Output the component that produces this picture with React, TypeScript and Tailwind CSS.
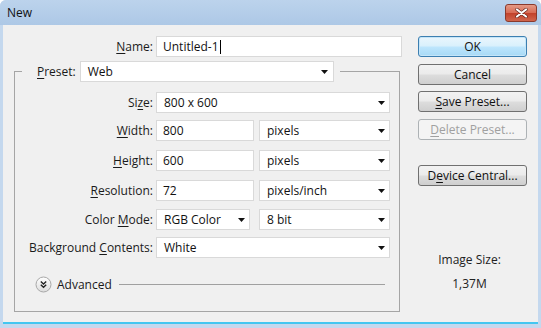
import React from "react";

const font = { fontFamily: '"Open Sans", "Liberation Sans", sans-serif' };

function Arrow() {
  return (
    <svg width="7" height="4" viewBox="0 0 7 4" className="shrink-0">
      <path d="M0 0h7L3.5 4z" fill="#111" />
    </svg>
  );
}

function Select({ value, className }: { value: string; className: string }) {
  return (
    <div
      className={`flex h-[21px] items-center justify-between border border-[#d9d9d9] bg-white pl-[7px] pr-[4px] text-[#111] ${className}`}
    >
      <span>{value}</span>
      <Arrow />
    </div>
  );
}

function Field({ value, className }: { value: string; className: string }) {
  return (
    <div
      className={`flex h-[21px] items-center border border-[#d9d9d9] bg-white pl-[6px] text-[#111] ${className}`}
    >
      {value}
    </div>
  );
}

function Label({ children }: { children: React.ReactNode }) {
  return <div className="w-[141px] shrink-0 pr-[3px] text-right text-[#1a1a1a]">{children}</div>;
}

function Btn({
  children,
  primary,
  disabled,
  className = "",
}: {
  children: React.ReactNode;
  primary?: boolean;
  disabled?: boolean;
  className?: string;
}) {
  let look =
    "border-[#707070] bg-[linear-gradient(#f2f2f2_0%,#ebebeb_48%,#dddddd_52%,#cfcfcf_100%)] text-[#111]";
  if (primary)
    look =
      "border-[#3c7fb1] bg-[linear-gradient(#eaf6fd_0%,#d9f0fc_48%,#bee6fd_52%,#a7d9f5_100%)] text-[#111] shadow-[inset_0_0_0_1px_#c5e5f8]";
  if (disabled) look = "border-[#adb2b5] bg-[#f4f4f4] text-[#a0a0a0]";
  return (
    <div
      className={`flex h-[21px] w-[109px] items-center justify-center rounded-[3px] border ${look} ${className}`}
    >
      {children}
    </div>
  );
}

const u = "underline underline-offset-[2px] decoration-1";

export default function App() {
  return (
    <div
      className="flex h-[328px] w-[541px] flex-col overflow-hidden rounded-t-[6px] bg-[#c4d8ee] text-[12px] leading-[15px]"
      style={font}
    >
      {/* title bar */}
      <div className="flex h-[25px] shrink-0 items-center justify-between bg-[linear-gradient(#bcd3ec,#adc8e6)] pl-[7px] pr-[4px]">
        <span className="text-[12px] text-[#111]">New</span>
        <div className="flex h-[18px] w-[32px] items-center justify-center rounded-[3px] border border-[#8a3a2c] bg-[linear-gradient(#e49a86_0%,#d86a53_50%,#c2422b_52%,#d0654c_100%)]">
          <svg width="13" height="10" viewBox="0 0 13 10">
            <path d="M2 1.5 11 8.5M11 1.5 2 8.5" stroke="#5a2018" strokeWidth="3.4" strokeLinecap="round" />
            <path d="M2 1.5 11 8.5M11 1.5 2 8.5" stroke="#fff" strokeWidth="2.2" strokeLinecap="round" />
          </svg>
        </div>
      </div>

      {/* body */}
      <div className="mx-[3px] mb-[4px] flex flex-1 border-b-2 border-[#43c6f0] bg-[#f0f0f0] pl-[11px]">
        {/* left column */}
        <div className="flex w-[388px] flex-col">
          <div className="mt-[11px] flex items-center">
            <div className="w-[142px] pr-[3px] text-right text-[#1a1a1a]">
              <span className={u}>N</span>ame:
            </div>
            <div className="flex h-[21px] w-[246px] items-center border border-[#d9d9d9] bg-white pl-[6px] text-[#111]">
              Untitled-1
              <span className="ml-px inline-block h-[14px] w-px bg-black" />
            </div>
          </div>

          <fieldset className="mt-[4px] w-[386px] border border-[#a5a5a5] pb-[18px] pr-[8px]">
            <legend className="ml-[7px] flex items-center pl-[15px] pr-[6px]">
              <span className="text-[#1a1a1a]">
                <span className={u}>P</span>reset:
              </span>
              <Select value="Web" className="ml-[4px] w-[254px] pr-[5px]" />
            </legend>

            <div className="mt-[10px] flex items-center">
              <Label>
                Si<span className={u}>z</span>e:
              </Label>
              <Select value="800 x 600" className="w-[234px]" />
            </div>
            <div className="mt-[7px] flex items-center">
              <Label>
                <span className={u}>W</span>idth:
              </Label>
              <Field value="800" className="w-[98px]" />
              <Select value="pixels" className="ml-[5px] w-[131px]" />
            </div>
            <div className="mt-[9px] flex items-center">
              <Label>
                <span className={u}>H</span>eight:
              </Label>
              <Field value="600" className="w-[98px]" />
              <Select value="pixels" className="ml-[5px] w-[131px]" />
            </div>
            <div className="mt-[9px] flex items-center">
              <Label>
                <span className={u}>R</span>esolution:
              </Label>
              <Field value="72" className="w-[98px]" />
              <Select value="pixels/inch" className="ml-[5px] w-[131px]" />
            </div>
            <div className="mt-[8px] flex items-center">
              <Label>
                Color <span className={u}>M</span>ode:
              </Label>
              <Select value="RGB Color" className="w-[94px]" />
              <Select value="8 bit" className="ml-[9px] w-[131px]" />
            </div>
            <div className="mt-[7px] flex items-center">
              <Label>
                Background <span className={u}>C</span>ontents:
              </Label>
              <Select value="White" className="w-[234px]" />
            </div>

            <div className="mt-[18px] flex items-center pl-[20px] pr-[6px]">
              <svg width="17" height="17" viewBox="0 0 17 17" className="shrink-0">
                <defs>
                  <linearGradient id="adv" x1="0" y1="0" x2="0" y2="1">
                    <stop offset="0" stopColor="#ffffff" />
                    <stop offset="1" stopColor="#dcdcdc" />
                  </linearGradient>
                </defs>
                <circle cx="8.5" cy="8.5" r="7.5" fill="url(#adv)" stroke="#a8a8a8" />
                <path d="M5.8 5.5 8.5 8l2.7-2.5M5.8 8.8l2.7 2.5 2.7-2.5" fill="none" stroke="#222" strokeWidth="1.4" />
              </svg>
              <span className="ml-[5px] text-[#1a1a1a]">Advanced</span>
              <div className="ml-[7px] h-px flex-1 bg-[#a0a0a0]" />
            </div>
          </fieldset>
        </div>

        {/* right column */}
        <div className="ml-[16px] flex w-[109px] flex-col items-center">
          <Btn primary className="mt-[11px]">
            OK
          </Btn>
          <Btn className="mt-[7px]">Cancel</Btn>
          <Btn className="mt-[6px]">
            <span>
              <span className={u}>S</span>ave Preset...
            </span>
          </Btn>
          <Btn disabled className="mt-[7px]">
            <span>
              <span className={u}>D</span>elete Preset...
            </span>
          </Btn>
          <Btn className="mt-[25px]">
            <span>
              D<span className={u}>e</span>vice Central...
            </span>
          </Btn>
          <div className="ml-[-6px] mt-[66px] text-[#222]">Image Size:</div>
          <div className="ml-[-6px] mt-[9px] text-[#222]">1,37M</div>
        </div>
      </div>
    </div>
  );
}
